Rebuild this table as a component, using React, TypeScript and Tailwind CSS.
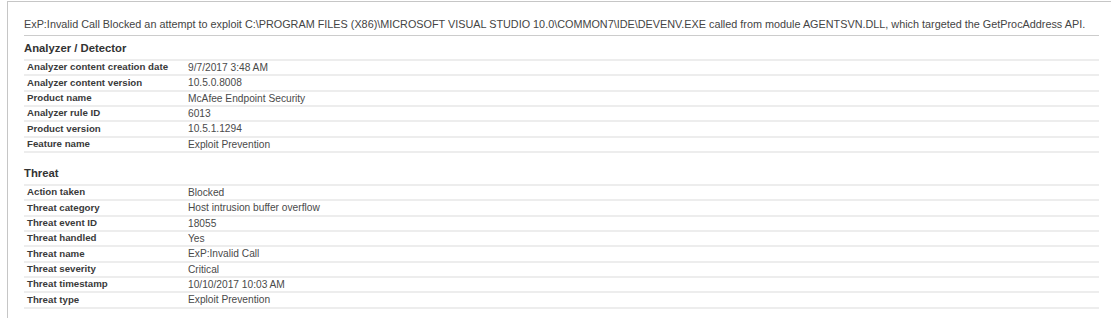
import React from 'react';

type Row = [string, string];

const analyzerRows: Row[] = [
    ['Analyzer content creation date', '9/7/2017 3:48 AM'],
    ['Analyzer content version', '10.5.0.8008'],
    ['Product name', 'McAfee Endpoint Security'],
    ['Analyzer rule ID', '6013'],
    ['Product version', '10.5.1.1294'],
    ['Feature name', 'Exploit Prevention'],
];

const threatRows: Row[] = [
    ['Action taken', 'Blocked'],
    ['Threat category', 'Host intrusion buffer overflow'],
    ['Threat event ID', '18055'],
    ['Threat handled', 'Yes'],
    ['Threat name', 'ExP:Invalid Call'],
    ['Threat severity', 'Critical'],
    ['Threat timestamp', '10/10/2017 10:03 AM'],
    ['Threat type', 'Exploit Prevention'],
];

const Section: React.FC<{ title: string; rows: Row[] }> = ({ title, rows }) => (
    <div>
        <h3 className="text-[11.3px] font-bold text-[#333] h-[22px] leading-[22px]">{title}</h3>
        <div className="border-t-2 border-[#ededed]">
            {rows.map(([label, value]) => (
                <div key={label} className="flex h-[15.33px] items-center border-b-2 border-[#ededed] whitespace-nowrap">
                    <div className="w-[164px] pl-[3px] text-[9.7px] font-bold text-[#3a3a3a]">{label}</div>
                    <div className="text-[10.2px] text-[#4a4a4a]">{value}</div>
                </div>
            ))}
        </div>
    </div>
);

const App: React.FC = () => {
    return (
        <div
            className="w-[1111px] h-[318px] overflow-hidden bg-white pl-[7px] pt-[1px]"
            style={{ fontFamily: '"Liberation Sans", Arial, sans-serif' }}
        >
            <div className="h-full border-l border-t border-[#c6c6c6] pl-[16px] pr-[12px]">
                <div className="pt-[15px] pb-[4px] leading-[14px] border-b border-[#cccccc] text-[10.83px] text-[#444] whitespace-nowrap">
                    ExP:Invalid Call Blocked an attempt to exploit C:\PROGRAM FILES (X86)\MICROSOFT VISUAL STUDIO 10.0\COMMON7\IDE\DEVENV.EXE called from module AGENTSVN.DLL, which targeted the GetProcAddress API.
                </div>
                <div className="pt-[1px]">
                    <Section title="Analyzer / Detector" rows={analyzerRows} />
                </div>
                <div className="pt-[9px]">
                    <Section title="Threat" rows={threatRows} />
                </div>
            </div>
        </div>
    );
};

export default App;
